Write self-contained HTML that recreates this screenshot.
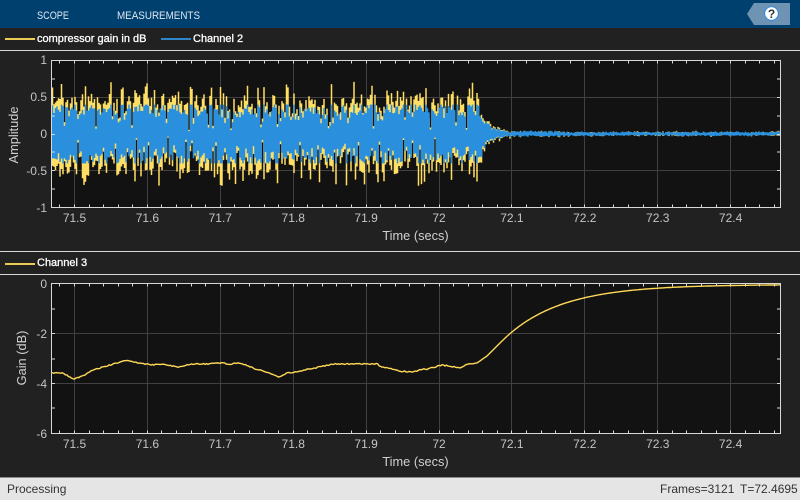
<!DOCTYPE html>
<html><head><meta charset="utf-8"><style>
html,body{margin:0;padding:0;background:#212121;width:800px;height:500px;overflow:hidden}
svg{display:block}
text{font-family:"Liberation Sans",Arial,sans-serif}
.t{font-size:12px;fill:#c4c4c4}
.l{font-size:12.8px;fill:#d0d0d0}
.g{font-size:11px;fill:#fff;stroke:#fff;stroke-width:.3px}
.tab{font-size:11px;fill:#dde7f0}
.s{font-size:12px;fill:#333}
</style></head><body>
<svg id="s" width="800" height="500" viewBox="0 0 800 500" xmlns="http://www.w3.org/2000/svg">
<defs>
<clipPath id="c1"><rect x="52" y="61" width="728" height="146"/></clipPath>
<clipPath id="c2"><rect x="52" y="284" width="728" height="149"/></clipPath>
</defs>
<rect width="800" height="500" fill="#212121"/>
<rect width="800" height="28" fill="#00406f"/>
<text class="tab" x="37" y="19" textLength="32" lengthAdjust="spacingAndGlyphs">SCOPE</text>
<text class="tab" x="117" y="19" textLength="83" lengthAdjust="spacingAndGlyphs">MEASUREMENTS</text>
<polygon points="747,14 754,3 790,3 790,25 754,25" fill="#6f93b3"/>
<circle cx="771.5" cy="13.5" r="6.8" fill="#fff" stroke="#1e88e5" stroke-width="0.9"/>
<text x="771.5" y="18" text-anchor="middle" style="font-size:12px;font-weight:bold;fill:#333">?</text>

<rect x="5" y="38" width="30" height="2" fill="#e9cc55"/>
<text class="g" x="37" y="42">compressor gain in dB</text>
<rect x="161" y="38" width="30" height="2" fill="#2f86c8"/>
<text class="g" x="193" y="42">Channel 2</text>
<rect x="0" y="50" width="800" height="1" fill="#d8d8d8"/>

<rect x="51.5" y="60.5" width="729" height="147" fill="#121212"/>
<g id="grid1" stroke="#404040" stroke-width="1"></g>
<g id="wave" clip-path="url(#c1)" fill="none"></g>
<g id="ticks1" stroke="#d8d8d8" stroke-width="1"></g>
<rect x="51.5" y="60.5" width="729" height="147" fill="none" stroke="#d8d8d8"/>
<g text-anchor="end" class="t">
<text x="47" y="64">1</text><text x="47" y="101">0.5</text><text x="47" y="138">0</text><text x="47" y="175">-0.5</text><text x="47" y="212">-1</text>
</g>
<g text-anchor="middle" class="t">
<text x="74.5" y="222">71.5</text><text x="147.4" y="222">71.6</text><text x="220.3" y="222">71.7</text><text x="293.2" y="222">71.8</text><text x="366.1" y="222">71.9</text><text x="439" y="222">72</text><text x="511.9" y="222">72.1</text><text x="584.8" y="222">72.2</text><text x="657.7" y="222">72.3</text><text x="730.6" y="222">72.4</text>
</g>
<text class="l" x="415.5" y="240" text-anchor="middle">Time (secs)</text>
<text class="l" transform="translate(18,135) rotate(-90)" text-anchor="middle">Amplitude</text>

<rect x="0" y="251" width="800" height="1" fill="#d8d8d8"/>
<rect x="5" y="263" width="30" height="2" fill="#e9cc55"/>
<text class="g" x="37" y="266">Channel 3</text>
<rect x="0" y="274" width="800" height="1" fill="#d8d8d8"/>

<rect x="51.5" y="283.5" width="729" height="150" fill="#121212"/>
<g id="grid2" stroke="#404040" stroke-width="1"></g>
<g clip-path="url(#c2)"><path id="gain" fill="none" stroke="#ffd957" stroke-width="1.4" stroke-linejoin="round" d=""/></g>
<g id="ticks2" stroke="#d8d8d8" stroke-width="1"></g>
<rect x="51.5" y="283.5" width="729" height="150" fill="none" stroke="#d8d8d8"/>
<g text-anchor="end" class="t">
<text x="47" y="288">0</text><text x="47" y="338">-2</text><text x="47" y="388">-4</text><text x="47" y="438">-6</text>
</g>
<g text-anchor="middle" class="t">
<text x="74.5" y="448">71.5</text><text x="147.4" y="448">71.6</text><text x="220.3" y="448">71.7</text><text x="293.2" y="448">71.8</text><text x="366.1" y="448">71.9</text><text x="439" y="448">72</text><text x="511.9" y="448">72.1</text><text x="584.8" y="448">72.2</text><text x="657.7" y="448">72.3</text><text x="730.6" y="448">72.4</text>
</g>
<text class="l" x="415.5" y="466" text-anchor="middle">Time (secs)</text>
<text class="l" transform="translate(26,358) rotate(-90)" text-anchor="middle">Gain (dB)</text>

<rect x="0" y="477" width="800" height="23" fill="#e5e5e5"/>
<rect x="0" y="477" width="800" height="1" fill="#8a8a8a"/>
<text class="s" x="7" y="493">Processing</text>
<text class="s" x="660" y="493">Frames=3121</text>
<text class="s" x="740" y="493">T=72.4695</text>
</svg>
<script>
(function(){
var N="http://www.w3.org/2000/svg",seed=987654321;
function r(){seed^=seed<<13;seed^=seed>>>17;seed^=seed<<5;seed>>>=0;return seed/4294967296}
function ln(p,a,b,c,d){var e=document.createElementNS(N,"line");e.setAttribute("x1",a);e.setAttribute("y1",b);e.setAttribute("x2",c);e.setAttribute("y2",d);p.appendChild(e)}
function $(i){return document.getElementById(i)}
function xm(i){return Math.round(74.5+72.9*i-0.5)+0.5}
function axes(g,t,y0,y1,ys,ms){
 var i;
 for(i=0;i<10;i++)ln(g,xm(i),y0,xm(i),y1);
 ys.forEach(function(y){ln(g,52,y,780,y)});
 for(i=-1;i<50;i++){var x=Math.round(74.5+14.58*i-0.5)+0.5;if(x<52||x>780)continue;ln(t,x,y0,x,y0+3);ln(t,x,y1,x,y1-3)}
 ms.forEach(function(y){ln(t,52,y,55,y);ln(t,780,y,777,y)});
}
axes($("grid1"),$("ticks1"),60.5,207.5,[97.5,134.5,170.5],[79,97.5,116,134.5,152,170.5,189]);
axes($("grid2"),$("ticks2"),283.5,433.5,[333.5,383.5],[309,333.5,359,383.5,408]);
/* waveform as per-column sticks */
var Y="",B="",x;
function amp(){var q=r();
 if(q<0.12)return 0.56+0.15*r();
 if(q<0.36)return 0.2+0.14*r();
 return 0.34+0.22*r();}
function Yc(a){return (134-a*73.5).toFixed(1)}
for(x=52.5;x<=780;x+=1.5){
 var e=x<478?1:(x<512?0.04+0.96*Math.exp(-(x-478)/10)*(0.6+0.6*r()):0);
 if(e>0){
  var t=amp()*e,b=amp()*e;
  var bt=Math.min(t*(0.6+0.25*r()),0.4*e), bb=Math.min(b*(0.6+0.25*r()),0.4*e);
  if(r()<0.3){bt=Math.max(bt,(0.26+0.1*r())*e)}
  if(r()<0.3){bb=Math.max(bb,(0.26+0.1*r())*e)}
  if(x>=478){bt=Math.max(bt,t*0.8);bb=Math.max(bb,b*0.8)}
  if(r()<0.05){t=0.05+0.12*r();bt=t*0.7}
  if(r()<0.05){b=0.05+0.12*r();bb=b*0.7}
  Y+="M"+x+" "+Yc(t)+"V"+Yc(-b);
  B+="M"+x+" "+Yc(bt)+"V"+Yc(-bb);
 }else{
  var c=133.8+(r()-.5)*1.2,h=1.2+r()*0.9;
  if(x<560)h+=0.6;
  B+="M"+x+" "+(c-h).toFixed(1)+"V"+(c+h).toFixed(1);
  if(r()<0.25)Y+="M"+x+" "+(c-h-.5).toFixed(1)+"V"+(c+h+.5).toFixed(1);
 }
}
var w=$("wave");
function pth(d,c,sw){var p=document.createElementNS(N,"path");p.setAttribute("d",d);p.setAttribute("stroke",c);p.setAttribute("stroke-width",sw);w.appendChild(p)}
pth(Y,"#ffdf63",1.5);pth(B,"#2a8fdc",1.5);
/* gain */
var pts=[[52,373],[62,373],[72,378],[75,379],[83,376],[93,370],[107,366],[123,361],[130,361],[140,363],[152,365],[162,364],[168,365],[178,367],[193,364],[207,364],[223,363],[230,364],[240,363],[253,368],[267,372],[278,377],[288,373],[300,371],[320,367],[332,364],[357,364],[377,364],[382,367],[400,371],[413,372],[423,369],[428,369],[442,365],[455,367],[460,368],[468,364],[477,363],[487,356],[500,343]];
for(x=505;x<=781;x+=5)pts.push([x,284.5+58.5*Math.exp(-(x-500)/57)]);
var d="",j=0;
for(x=52;x<=781;x+=1.5){
 while(j<pts.length-2&&pts[j+1][0]<x)j++;
 var a=pts[j],b2=pts[j+1],y=a[1]+(b2[1]-a[1])*(x-a[0])/(b2[0]-a[0]);
 if(x<475)y+=(r()-.5)*1.2;
 d+=(d?"L":"M")+x.toFixed(1)+" "+y.toFixed(1);
}
$("gain").setAttribute("d",d);
})();
</script>
</body></html>
